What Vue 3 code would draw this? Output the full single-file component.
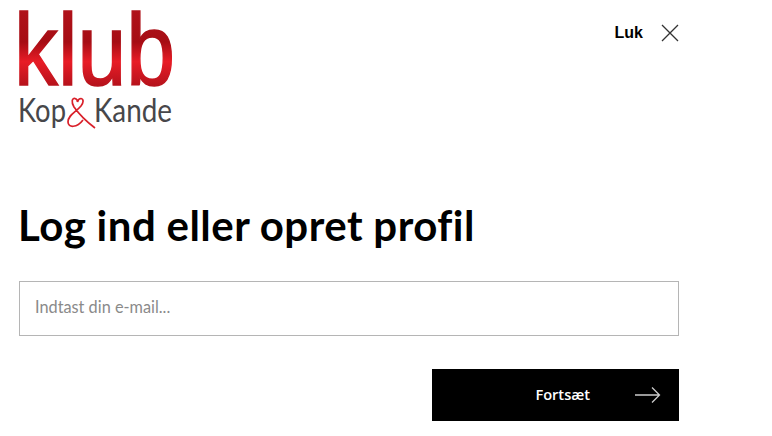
<script setup>
const title = 'Log ind eller opret profil'
</script>

<template>
  <main class="page">
    <header class="top">
      <svg class="logo" width="160" height="122" viewBox="0 0 160 122" aria-label="Klub Kop og Kande">
        <defs>
          <linearGradient id="red" gradientUnits="userSpaceOnUse" x1="0" y1="0" x2="0" y2="76">
            <stop offset="0" stop-color="#b0121a" />
            <stop offset="0.42" stop-color="#a60d14" />
            <stop offset="0.68" stop-color="#e81c26" />
            <stop offset="1" stop-color="#b5121b" />
          </linearGradient>
        </defs>
        <text class="klub" x="-5" y="75" textLength="161" lengthAdjust="spacingAndGlyphs" fill="url(#red)" stroke="url(#red)" stroke-width="1.6">klub</text>
        <text class="kop" x="-1" y="112" textLength="48" lengthAdjust="spacingAndGlyphs">Kop</text>
        <text class="kop" x="75" y="112" textLength="78" lengthAdjust="spacingAndGlyphs">Kande</text>
        <path d="M76 118C68 112 60 104 55 97C52 92 53 88 56 88.5C58 89 58.5 91 58.5 92C59 90 60 88.5 62 88.5C65 89 64.5 93 62 96C57 102 49 105 49 112C49 118 58 118 64 110" fill="none" stroke="#d9202a" stroke-width="1.7" />
      </svg>
      <button class="close" type="button">
        <span>Luk</span>
        <svg width="18" height="18" viewBox="0 0 18 18"><path d="M1 1L17 17M17 1L1 17" stroke="#333" stroke-width="1.3" fill="none" /></svg>
      </button>
    </header>
    <h1>{{ title }}</h1>
    <div class="field">Indtast din e-mail...</div>
    <div class="actions">
      <button class="submit" type="button">
        <span class="label">Fortsæt</span>
        <svg class="arrow" width="26" height="18" viewBox="0 0 26 18"><path d="M0 9H24M17 1.5L24.5 9L17 16.5" stroke="#ccc" stroke-width="1.3" fill="none" /></svg>
      </button>
    </div>
  </main>
</template>

<style scoped>
.page {
  width: 660px;
  padding: 10px 0 0 19px;
  font-family: "Open Sans", sans-serif;
}
.top {
  display: flex;
  justify-content: space-between;
  align-items: flex-start;
}
.logo {
  display: block;
  overflow: visible;
}
.klub {
  font-family: "Liberation Sans", sans-serif;
  font-size: 102px;
}
.kop {
  font-family: "Lato", sans-serif;
  font-size: 32px;
  fill: #47474a;
}
.close {
  display: flex;
  align-items: center;
  gap: 18px;
  margin-top: 14px;
  padding: 0;
  border: 0;
  background: none;
  color: #000;
  font: bold 16px "Liberation Sans", sans-serif;
}
h1 {
  margin: 68px 0 0 -1px;
  font-family: "Lato", sans-serif;
  font-size: 42px;
  line-height: 50px;
  font-weight: 700;
  letter-spacing: 0.5px;
  word-spacing: -0.5px;
  color: #000;
}
.field {
  box-sizing: border-box;
  height: 55px;
  margin-top: 31px;
  padding-left: 15px;
  border: 1px solid #b5b5b5;
  color: #8a8a8a;
  font-family: "Lato", sans-serif;
  font-size: 16.3px;
  line-height: 50px;
}
.actions {
  display: flex;
  justify-content: flex-end;
  margin-top: 33px;
}
.submit {
  display: flex;
  align-items: center;
  justify-content: flex-end;
  width: 247px;
  height: 52px;
  padding: 0 18px 0 0;
  border: 0;
  background: #000;
  color: #fff;
  font-family: "Open Sans", sans-serif;
  font-size: 14.6px;
  font-weight: 600;
}
.label {
  padding-bottom: 3px;
}
.arrow {
  margin-left: 45px;
}
</style>

<style>
body { background: #fff; }
</style>
